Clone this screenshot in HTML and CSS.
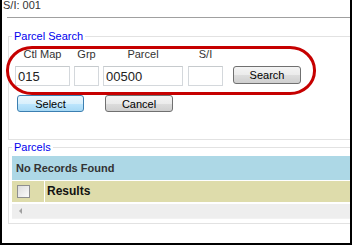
FILE: index.html
```html
<!DOCTYPE html>
<html lang="en">
<head>
    <meta charset="UTF-8">
    <meta name="viewport" content="width=device-width, initial-scale=1">
    <link rel="stylesheet" href="styles.css">
    <title>Parcel Search</title>
</head>
<body>
<div class="frame">
    <div class="title">S/I: 001</div>
    <div class="rule"></div>

    <fieldset class="group search">
        <legend>Parcel Search</legend>
        <div class="fields">
            <div class="field ctl"><label>Ctl Map</label><input type="text" value="015"></div>
            <div class="field grp"><label>Grp</label><input type="text"></div>
            <div class="field parcel"><label>Parcel</label><input type="text" value="00500"></div>
            <div class="field si"><label>S/I</label><input type="text"></div>
            <button class="btn searchbtn">Search</button>
        </div>
        <div class="actions">
            <button class="btn selectbtn">Select</button>
            <button class="btn cancelbtn">Cancel</button>
        </div>
    </fieldset>

    <fieldset class="group parcels">
        <legend>Parcels</legend>
        <div class="empty">No Records Found</div>
        <div class="head">
            <span class="checkcell"><input type="checkbox" class="check"></span>
            <span class="headtitle">Results</span>
        </div>
        <div class="scroll"><span class="arrow"></span></div>
    </fieldset>

    <!-- annotation ring round the search fields -->
    <div class="highlight"></div>
</div>
</body>
</html>
```

FILE: styles.css
```css
body {
    margin: 0;
    font-family: "Liberation Sans", Arial, sans-serif;
}

.frame {
    position: relative;
    width: 352px;
    height: 245px;
    box-sizing: border-box;
    border-left: 2px solid #000;
    border-right: 2px solid #000;
    border-bottom: 2px solid #000;
    overflow: hidden;
    background: #fff;
}

.title {
    padding-left: 1px;
    font-size: 11px;
    line-height: 10px;
    color: #333;
}

.rule {
    margin: 7px 0 0 5px;
    border-top: 1px solid #a0a0a0;
}

.group {
    margin: 0 -40px 0 6px;
    padding: 0 0 0 3px;
    border: 1px solid #e2e2e2;
}

.group legend {
    padding: 0 2px;
    font-size: 11px;
    line-height: 13px;
    color: #0000ee;
}

.search {
    margin-top: 12px;
    padding-top: 5px;
    padding-bottom: 27px;
}

.fields {
    display: flex;
    align-items: flex-end;
    margin-left: 3px;
}

.field {
    display: flex;
    flex-direction: column;
    align-items: center;
    margin-right: 4px;
}

.field label {
    font-size: 11px;
    line-height: 13px;
    color: #333;
    margin-bottom: 5px;
}

.field input {
    box-sizing: border-box;
    height: 20px;
    margin: 0;
    padding: 0 2px;
    border: 1px solid #d4d8dc;
    border-top-color: #c6cacd;
    font: 13px "Liberation Sans", Arial, sans-serif;
    color: #222;
    outline: none;
}

.ctl input { width: 55px; }
.grp input { width: 25px; }
.parcel input { width: 80px; }
.si { margin-right: 0; margin-left: 1px; }
.si input { width: 35px; }

.btn {
    box-sizing: border-box;
    height: 18px;
    padding: 0;
    border: 1px solid #707070;
    border-radius: 3px;
    background: linear-gradient(#f4f4f4 0%, #ebebeb 50%, #dddddd 51%, #cfcfcf 100%);
    font: 11px "Liberation Sans", Arial, sans-serif;
    color: #000;
}

.searchbtn {
    width: 68px;
    margin: 0 0 2px 10px;
}

.actions {
    display: flex;
    margin: 9px 0 0 5px;
}

.selectbtn {
    width: 67px;
    height: 17px;
    border-color: #3c7fb1;
    background: linear-gradient(#eaf6fd 0%, #d9f0fc 50%, #bee6fd 51%, #a7d9f5 100%);
}

.cancelbtn {
    width: 68px;
    height: 17px;
    margin-left: 21px;
}

.parcels {
    margin-top: 1px;
    padding-top: 2px;
    padding-bottom: 4px;
}

.empty {
    height: 24px;
    line-height: 24px;
    padding-left: 4px;
    background: #add8e6;
    font-size: 11px;
    font-weight: bold;
    color: #333;
}

.head {
    display: flex;
    height: 21px;
    margin-top: 1px;
    background: #dedcab;
}

.checkcell {
    display: flex;
    align-items: center;
    width: 33px;
    padding-left: 5px;
    box-sizing: border-box;
    border-right: 1px solid #fff;
}

.check {
    appearance: none;
    width: 13px;
    height: 13px;
    margin: 0;
    border: 1px solid #8e8f8f;
    background: linear-gradient(135deg, #dcdcdc, #fbfbfb);
    box-sizing: border-box;
}

.headtitle {
    padding-left: 2px;
    line-height: 21px;
    font-size: 12px;
    font-weight: bold;
    color: #111;
}

.scroll {
    display: flex;
    align-items: center;
    height: 14px;
    margin-top: 2px;
    padding-left: 7px;
    background: #eeeeee;
    border-bottom: 1px solid #f2f2f2;
}

.arrow {
    width: 0;
    height: 0;
    border-top: 3px solid transparent;
    border-bottom: 3px solid transparent;
    border-right: 3px solid #a0a0a0;
}

.highlight {
    position: absolute;
    left: 4px;
    top: 46px;
    width: 310px;
    height: 49px;
    box-sizing: border-box;
    border: 3px solid #c60000;
    border-radius: 26px / 24px;
}
```
